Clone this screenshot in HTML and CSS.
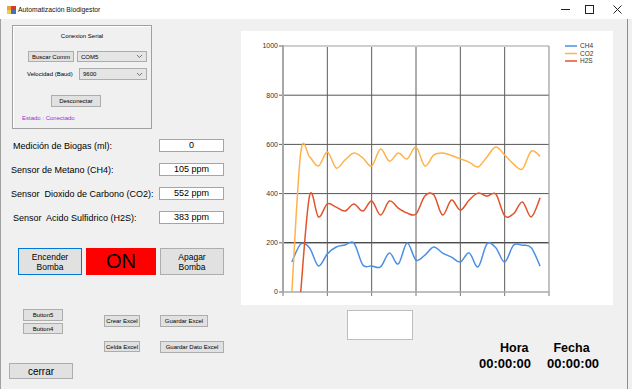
FILE: index.html
```html
<!DOCTYPE html>
<html lang="es">
<head>
<meta charset="UTF-8">
<meta name="viewport" content="width=device-width, initial-scale=1.0">
<title>Automatización Biodigestor</title>
<link rel="stylesheet" href="styles.css">
</head>
<body>
<div class="window">
    <div class="titlebar">
        <svg class="app-icon" width="9" height="8" viewBox="0 0 9 8">
            <rect x="0" y="0" width="4" height="4" fill="#e9a23b"/>
            <rect x="4" y="0" width="5" height="4" fill="#d8392c"/>
            <rect x="0" y="4" width="4" height="4" fill="#f2cd40"/>
            <rect x="4" y="4" width="5" height="4" fill="#3b74c6"/>
        </svg>
        <span class="title">Automatización Biodigestor</span>
        <div class="win-controls">
            <span class="win-btn"><svg width="9" height="9" viewBox="0 0 9 9"><line x1="0" y1="4.5" x2="9" y2="4.5" stroke="#222" stroke-width="1"/></svg></span>
            <span class="win-btn"><svg width="9" height="9" viewBox="0 0 9 9"><rect x="0.5" y="0.5" width="8" height="8" fill="none" stroke="#222" stroke-width="1"/></svg></span>
            <span class="win-btn win-close"><svg width="9" height="9" viewBox="0 0 9 9"><path d="M0.5 0.5 L8.5 8.5 M8.5 0.5 L0.5 8.5" stroke="#222" stroke-width="1"/></svg></span>
        </div>
    </div>
    <div class="client">
        <div class="top">
            <div class="left">
                <div class="serial-box">
                    <div class="serial-title">Conexion Serial</div>
                    <div class="serial-row row-com">
                        <button class="btn btn-com">Buscar Comm</button>
                        <div class="combo combo-com">COM5<svg class="combo-arrow" width="5" height="3" viewBox="0 0 5 3"><polyline points="0,0 2.5,2.5 5,0" fill="none" stroke="#555" stroke-width="0.8"/></svg></div>
                    </div>
                    <div class="serial-row row-baud">
                        <span class="baud-label">Velocidad (Baud)</span>
                        <div class="combo combo-baud">9600<svg class="combo-arrow" width="5" height="3" viewBox="0 0 5 3"><polyline points="0,0 2.5,2.5 5,0" fill="none" stroke="#555" stroke-width="0.8"/></svg></div>
                    </div>
                    <div class="serial-row row-disc">
                        <button class="btn btn-disc">Desconectar</button>
                    </div>
                    <div class="estado">Estado : Conectado</div>
                </div>

                <div class="sensors">
                    <div class="sensor-row">
                        <span class="sensor-label indent">Medición de Biogas (ml):</span>
                        <div class="value-box">0</div>
                    </div>
                    <div class="sensor-row">
                        <span class="sensor-label">Sensor de Metano (CH4):</span>
                        <div class="value-box">105 ppm</div>
                    </div>
                    <div class="sensor-row">
                        <span class="sensor-label">Sensor  Dioxido de Carbono (CO2):</span>
                        <div class="value-box">552 ppm</div>
                    </div>
                    <div class="sensor-row">
                        <span class="sensor-label indent">Sensor  Acido Sulfidrico (H2S):</span>
                        <div class="value-box">383 ppm</div>
                    </div>
                </div>

                <div class="pump">
                    <button class="btn btn-pump focused">Encender<br>Bomba</button>
                    <div class="on-label">ON</div>
                    <button class="btn btn-pump">Apagar<br>Bomba</button>
                </div>
            </div>
            <div class="chart">
                <svg id="chart" width="372" height="274" viewBox="0 0 372 274"></svg>
            </div>
        </div>

        <div class="bottom">
            <div class="col-a">
                <button class="btn btn-small btn5">Button5</button>
                <button class="btn btn-small btn4">Button4</button>
                <button class="btn btn-cerrar">cerrar</button>
            </div>
            <div class="col-b">
                <button class="btn btn-small btn-crear">Crear Excel</button>
                <button class="btn btn-small btn-celda">Celda Excel</button>
            </div>
            <div class="col-c">
                <button class="btn btn-small btn-guardar">Guardar Excel</button>
                <button class="btn btn-small btn-dato">Guardar Dato Excel</button>
            </div>
            <div class="blank-box"></div>
            <div class="clock">
                <div class="clock-head"><span>Hora</span><span>Fecha</span></div>
                <div class="clock-time"><span>00:00:00</span><span>00:00:00</span></div>
            </div>
        </div>
    </div>
</div>

<script>
    const svgNS = 'http://www.w3.org/2000/svg';
    const chart = document.getElementById('chart');
    const L = 42, T = 15, R = 308, B = 261;

    // lecturas de los sensores (una por muestra)
    const series = [
        { name: 'CH4', color: '#4a8fe3', start: 1, data: [122, 195, 179, 106, 155, 183, 191, 199, 110, 106, 102, 159, 114, 199, 130, 150, 183, 158, 142, 122, 159, 102, 195, 180, 122, 190, 190, 180, 105] },
        { name: 'CO2', color: '#ffb24a', start: 1, data: [0, 566, 549, 512, 569, 504, 537, 565, 545, 512, 581, 532, 565, 541, 589, 512, 557, 565, 555, 541, 528, 508, 549, 589, 557, 520, 500, 573, 552] },
        { name: 'H2S', color: '#e2532b', start: 2, data: [0, 392, 305, 358, 345, 329, 358, 329, 370, 313, 370, 341, 321, 317, 390, 395, 313, 374, 333, 374, 402, 390, 398, 310, 318, 366, 305, 383] }
    ];

    function sx(i) { return L + i * (R - L) / 30; }
    function sy(v) { return B - v * (B - T) / 1000; }

    function add(tag, attrs, text) {
        const el = document.createElementNS(svgNS, tag);
        for (const k in attrs) el.setAttribute(k, attrs[k]);
        if (text) el.textContent = text;
        chart.appendChild(el);
        return el;
    }

    function spline(pts) {
        let d = `M${pts[0][0]},${pts[0][1]}`;
        for (let k = 0; k < pts.length - 1; k++) {
            const p0 = pts[k - 1] || pts[k];
            const p1 = pts[k];
            const p2 = pts[k + 1];
            const p3 = pts[k + 2] || p2;
            const c1x = p1[0] + (p2[0] - p0[0]) / 6;
            const c1y = p1[1] + (p2[1] - p0[1]) / 6;
            const c2x = p2[0] - (p3[0] - p1[0]) / 6;
            const c2y = p2[1] - (p3[1] - p1[1]) / 6;
            d += ` C${c1x},${c1y} ${c2x},${c2y} ${p2[0]},${p2[1]}`;
        }
        return d;
    }

    // lineas horizontales y etiquetas del eje Y
    for (let v = 0; v <= 1000; v += 200) {
        const y = sy(v);
        if (v > 0 && v < 1000) {
            add('line', { x1: L, y1: y, x2: R, y2: y, stroke: v === 200 ? '#000' : '#555', 'stroke-width': 1 });
        }
        add('line', { x1: L - 4, y1: y, x2: L, y2: y, stroke: '#666', 'stroke-width': 1 });
        add('text', { x: L - 5, y: y + 2.4, 'text-anchor': 'end', class: 'axis-label' }, String(v));
    }

    // lineas verticales
    for (let i = 5; i < 30; i += 5) {
        add('line', { x1: sx(i), y1: T, x2: sx(i), y2: B, stroke: '#5c5c5c', 'stroke-width': 1 });
    }
    for (let i = 0; i <= 30; i += 5) {
        add('line', { x1: sx(i), y1: B, x2: sx(i), y2: B + 4, stroke: '#777', 'stroke-width': 1 });
    }

    add('line', { x1: L, y1: T, x2: R, y2: T, stroke: '#cfcfcf', 'stroke-width': 2 });
    add('line', { x1: R, y1: T, x2: R, y2: B, stroke: '#9a9a9a', 'stroke-width': 1.2 });
    add('line', { x1: L, y1: B, x2: R, y2: B, stroke: '#a8a8a8', 'stroke-width': 1.5 });
    add('line', { x1: L, y1: T - 1, x2: L, y2: B + 1, stroke: '#a8a8a8', 'stroke-width': 2 });

    series.forEach(function (s, n) {
        const pts = s.data.map(function (v, k) { return [sx(s.start + k), sy(v)]; });
        add('path', { d: spline(pts), fill: 'none', stroke: s.color, 'stroke-width': 1.5 });

        // leyenda
        const ly = 15 + n * 7.5;
        add('line', { x1: 324, y1: ly, x2: 336, y2: ly, stroke: s.color, 'stroke-width': 1.5 });
        add('text', { x: 339, y: ly + 2.3, class: 'legend-label' }, s.name);
    });
</script>
</body>
</html>
```

FILE: styles.css
```css
* {
    box-sizing: border-box;
}
body {
    margin: 0;
    width: 632px;
    height: 389px;
    overflow: hidden;
    background-color: #f0f0f0;
    font-family: "Liberation Sans", Arial, sans-serif;
    color: #000;
}
.window {
    width: 632px;
    height: 389px;
}
.titlebar {
    height: 19px;
    background-color: #ffffff;
    display: flex;
    align-items: center;
}
.app-icon {
    margin-left: 7px;
}
.title {
    margin-left: 2px;
    font-size: 6.8px;
    color: #111;
}
.win-controls {
    margin-left: auto;
    margin-right: 1px;
    display: flex;
    height: 19px;
}
.win-btn {
    width: 24px;
    display: flex;
    align-items: center;
    justify-content: center;
}
.win-close {
    width: 28px;
    margin-left: 2px;
}
.client {
    width: 628px;
    height: 370px;
    border-left: 1px solid #a0a0a0;
    border-right: 1px solid #8c8c8c;
}
.top {
    display: flex;
    height: 286px;
}
.left {
    width: 240px;
}
.chart {
    margin-top: 12px;
    width: 372px;
    height: 274px;
    background-color: #ffffff;
}
.chart svg {
    display: block;
}
.axis-label {
    font-family: "Liberation Sans", Arial, sans-serif;
    font-size: 7px;
    fill: #333;
}
.legend-label {
    font-family: "Liberation Sans", Arial, sans-serif;
    font-size: 6.5px;
    fill: #333;
}

/* botones estilo windows */
.btn {
    display: flex;
    align-items: center;
    justify-content: center;
    padding: 0;
    margin: 0;
    font-family: "Liberation Sans", Arial, sans-serif;
    color: #000;
    background-color: #e1e1e1;
    border: 1px solid #adadad;
    white-space: nowrap;
}

/* conexion serial */
.serial-box {
    margin: 6px 0 0 11px;
    width: 140px;
    height: 104px;
    border: 1px solid #a0a0a0;
    box-shadow: inset 1px 1px 0 #ffffff;
    font-size: 6px;
}
.serial-title {
    margin-top: 6px;
    line-height: 8px;
    text-align: center;
}
.serial-row {
    display: flex;
    align-items: center;
}
.row-com {
    margin-top: 11px;
    height: 11px;
    padding-left: 15px;
}
.btn-com {
    width: 46px;
    height: 11px;
    font-size: 6px;
}
.combo {
    display: flex;
    align-items: center;
    justify-content: space-between;
    height: 11px;
    padding: 0 4px 0 3px;
    background-color: #e5e5e5;
    border: 1px solid #acacac;
}
.combo-com {
    margin-left: 3px;
    width: 70px;
}
.row-baud {
    margin-top: 6px;
    height: 12px;
    padding-left: 14px;
}
.baud-label {
    width: 50px;
}
.combo-baud {
    margin-left: 2px;
    width: 68px;
    height: 12px;
}
.row-disc {
    margin-top: 15px;
    height: 12px;
    padding-left: 38px;
}
.btn-disc {
    width: 50px;
    height: 12px;
    font-size: 6px;
}
.estado {
    margin-top: 6px;
    padding-left: 9px;
    line-height: 10px;
    color: #9b2fd8;
}

/* sensores */
.sensors {
    margin-top: 10px;
    display: flex;
    flex-direction: column;
    gap: 11px;
}
.sensor-row {
    display: grid;
    grid-template-columns: 158px 65px;
    align-items: center;
    height: 13px;
}
.sensor-label {
    padding-left: 10px;
    font-size: 9px;
    white-space: pre;
}
.sensor-label.indent {
    padding-left: 12px;
}
.value-box {
    height: 13px;
    background-color: #ffffff;
    border: 1px solid #a5a5a5;
    font-size: 9px;
    line-height: 11px;
    text-align: center;
}

/* bomba */
.pump {
    margin-top: 24px;
    padding-left: 17px;
    display: flex;
    gap: 4px;
    height: 27px;
}
.btn-pump {
    width: 64px;
    height: 27px;
    font-size: 8.5px;
    line-height: 10px;
    white-space: normal;
    text-align: center;
}
.btn-pump.focused {
    border-color: #0078d7;
}
.on-label {
    width: 70px;
    height: 27px;
    background-color: #ff0000;
    font-size: 20px;
    line-height: 27px;
    text-align: center;
}

/* parte inferior */
.bottom {
    display: flex;
    align-items: flex-start;
    height: 84px;
}
.col-a,
.col-b,
.col-c {
    display: flex;
    flex-direction: column;
    align-items: flex-start;
}
.col-a {
    margin-left: 8px;
    width: 64px;
}
.btn-small {
    height: 12px;
    font-size: 6px;
}
.btn5 {
    margin: 4px 0 0 14px;
    width: 40px;
}
.btn4 {
    margin: 2px 0 0 14px;
    width: 40px;
    height: 11px;
}
.btn-cerrar {
    margin-top: 29px;
    width: 64px;
    height: 16px;
    font-size: 10px;
}
.col-b {
    margin-left: 31px;
    width: 36px;
}
.btn-crear {
    margin-top: 10px;
    width: 36px;
}
.btn-celda {
    margin-top: 14px;
    width: 36px;
    height: 11px;
}
.col-c {
    margin-left: 20px;
    width: 64px;
}
.btn-guardar {
    margin-top: 10px;
    width: 48px;
}
.btn-dato {
    margin-top: 14px;
    width: 64px;
}
.blank-box {
    margin: 5px 0 0 123px;
    width: 66px;
    height: 30px;
    background-color: #ffffff;
    border: 1px solid #bdbdbd;
}
.clock {
    margin-top: 35.5px;
    font-weight: bold;
}
.clock-head {
    padding-left: 87px;
    font-size: 12.5px;
    line-height: 15px;
}
.clock-head span + span {
    margin-left: 25px;
}
.clock-time {
    padding-left: 66px;
    font-size: 13px;
    line-height: 16px;
}
.clock-time span + span {
    margin-left: 16px;
}
```
